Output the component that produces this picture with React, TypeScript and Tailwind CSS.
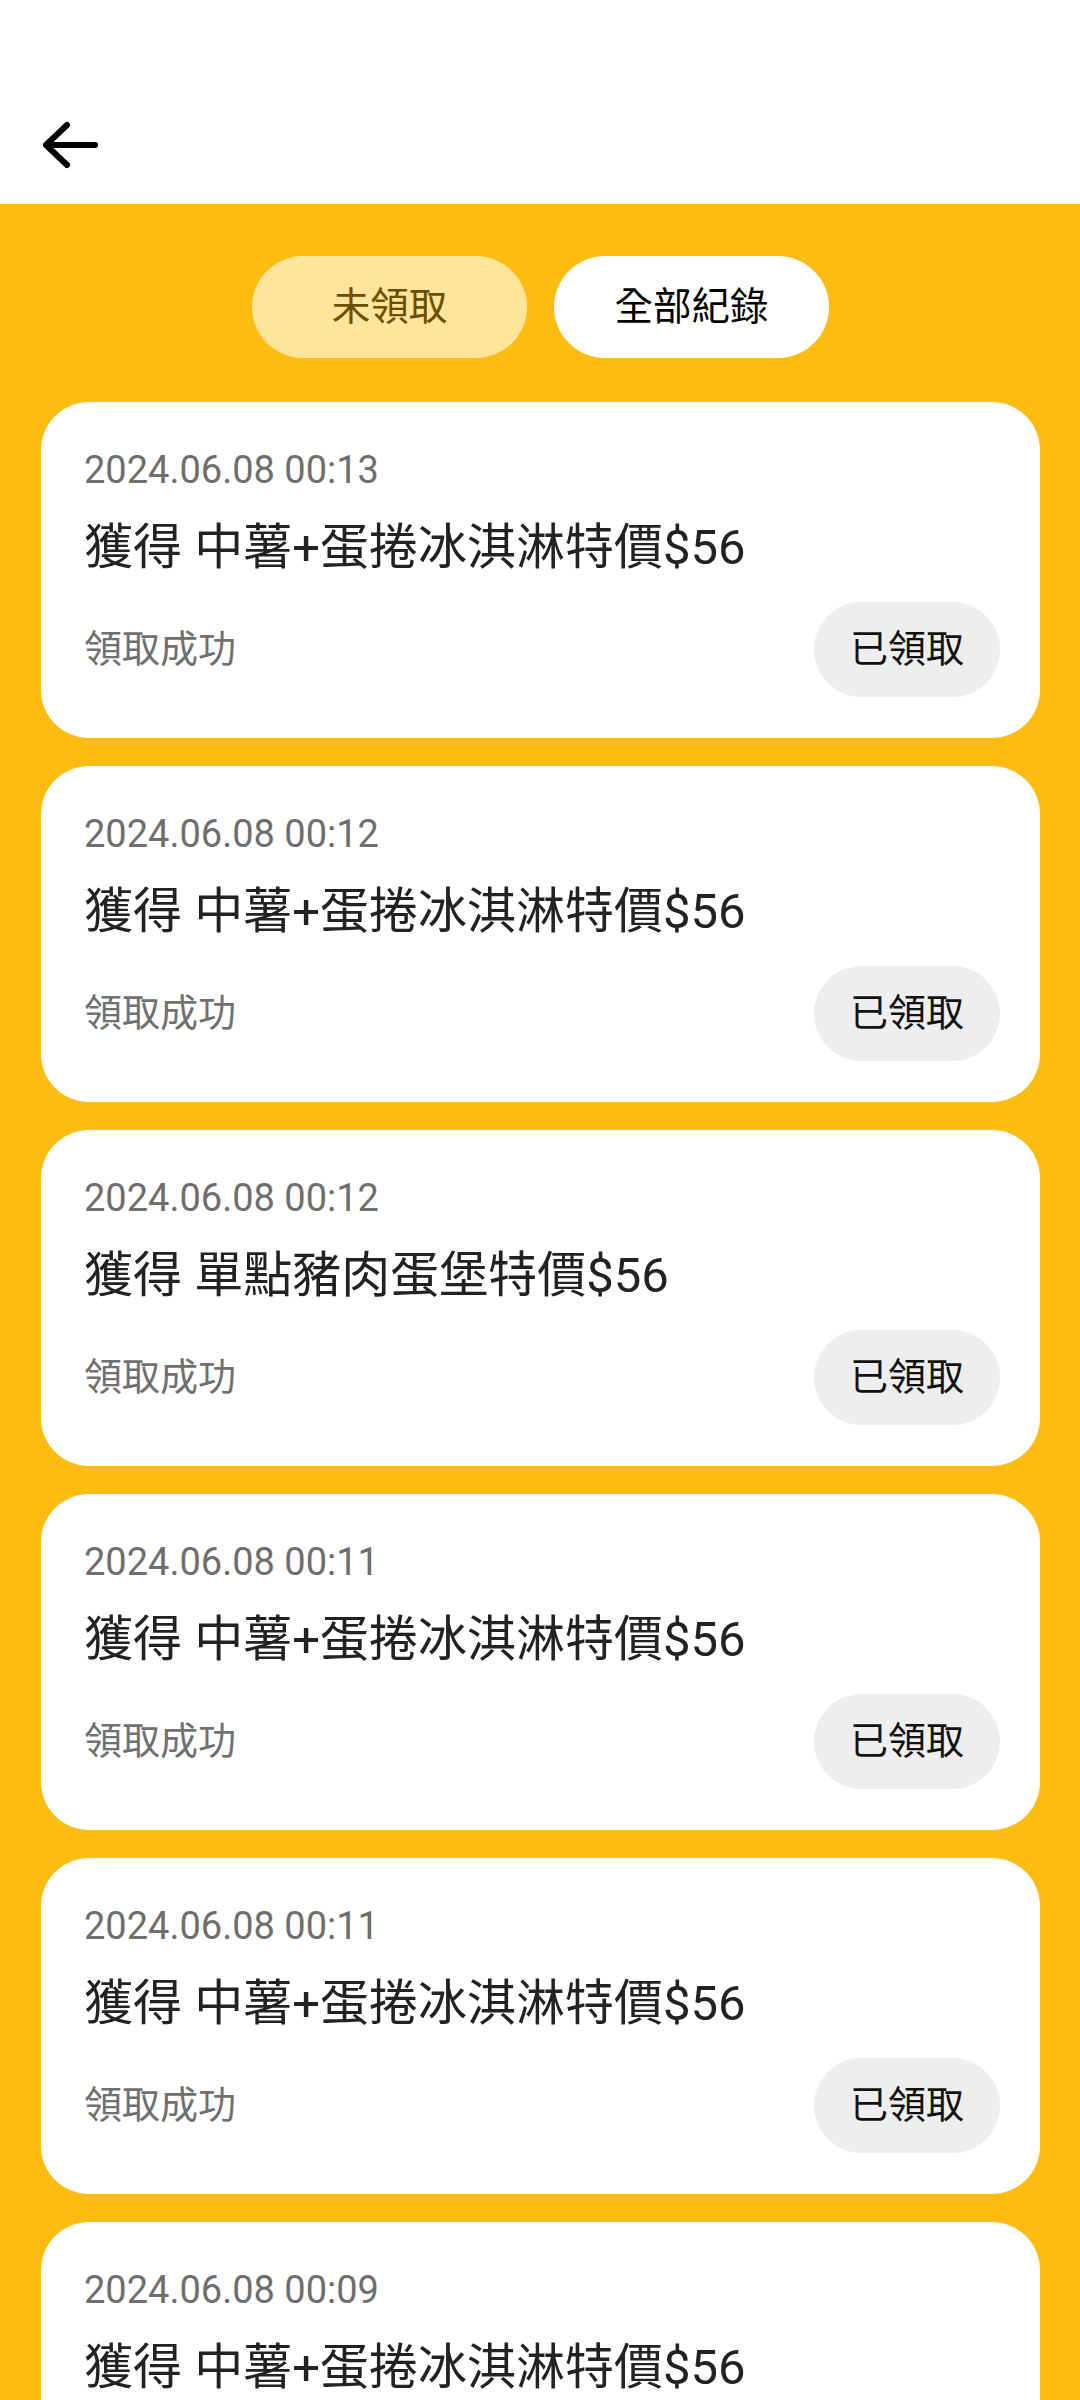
import React from "react";

const records = [
  { time: "2024.06.08 00:13", title: "獲得 中薯+蛋捲冰淇淋特價$56" },
  { time: "2024.06.08 00:12", title: "獲得 中薯+蛋捲冰淇淋特價$56" },
  { time: "2024.06.08 00:12", title: "獲得 單點豬肉蛋堡特價$56" },
  { time: "2024.06.08 00:11", title: "獲得 中薯+蛋捲冰淇淋特價$56" },
  { time: "2024.06.08 00:11", title: "獲得 中薯+蛋捲冰淇淋特價$56" },
  { time: "2024.06.08 00:09", title: "獲得 中薯+蛋捲冰淇淋特價$56" },
  { time: "2024.06.08 00:08", title: "獲得 中薯+蛋捲冰淇淋特價$56" },
];

const BackArrow = () => (
  <svg width="62" height="50" viewBox="0 0 62 50" fill="none">
    <path
      d="M6 24H55M27 4L6 24L27 44"
      stroke="#000"
      strokeWidth="6"
      strokeLinecap="round"
      strokeLinejoin="round"
    />
  </svg>
);

const RecordCard = ({ time, title }: { time: string; title: string }) => (
  <div className="bg-white rounded-[48px] pl-[43px] pr-[40px] pt-[44px] pb-[41px]">
    <div className="text-[38px] leading-[48px] text-[#6e6e6e]">{time}</div>
    <div className="mt-[24px] text-[49px] leading-[60px] text-[#222222]">{title}</div>
    <div className="mt-[24px] flex items-center justify-between">
      <span className="text-[38px] text-[#707070]">領取成功</span>
      <button className="h-[95px] w-[186px] rounded-full bg-[#eeeeee] text-[38px] text-[#111111]">
        已領取
      </button>
    </div>
  </div>
);

export default function App() {
  return (
    <div
      className="min-h-screen bg-[#fdbc12]"
      style={{ fontFamily: "Roboto, 'Noto Sans CJK TC', sans-serif" }}
    >
      {/* header */}
      <header className="h-[204px] bg-white flex items-end pb-[33px] pl-[40px]">
        <BackArrow />
      </header>

      <main className="pl-[41px] pr-[40px] pb-10">
        <div className="flex justify-center gap-[27px] pt-[52px]">
          <button className="h-[102px] w-[275px] rounded-full bg-[#ffe49b] text-[38.5px] text-[#6b4f00]">
            未領取
          </button>
          <button className="h-[102px] w-[275px] rounded-full bg-white text-[38.5px] text-black">
            全部紀錄
          </button>
        </div>

        <div className="mt-[44px] flex flex-col gap-[28px]">
          {records.map((r, i) => (
            <RecordCard key={i} time={r.time} title={r.title} />
          ))}
        </div>
      </main>
    </div>
  );
}
